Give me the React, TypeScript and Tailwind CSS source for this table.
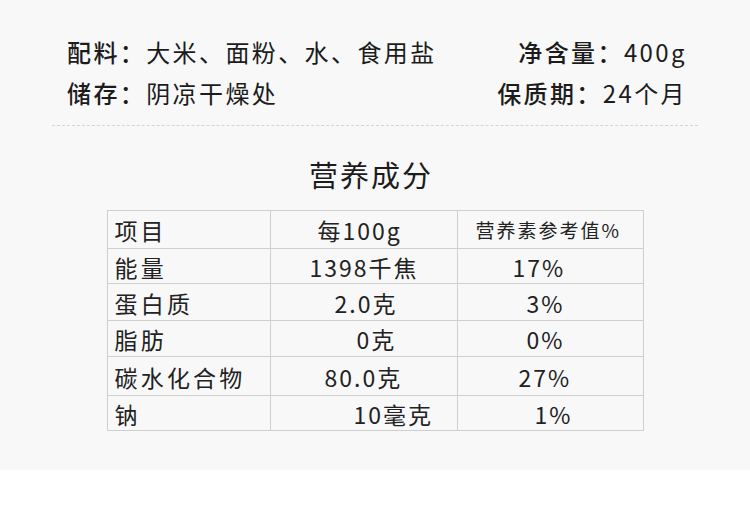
const FONT = { fontFamily: '"Noto Sans CJK SC", "Noto Sans", sans-serif' };

interface Row {
  name: string;
  amount: string;
  nrv: string;
  h: string;
  amountPad: string;
  nrvPad: string;
}

const ROWS: Row[] = [
  { name: "能量", amount: "1398千焦", nrv: "17%", h: "h-[35px]", amountPad: "pl-[39px]", nrvPad: "pl-[55px]" },
  { name: "蛋白质", amount: "2.0克", nrv: "3%", h: "h-[37px]", amountPad: "pl-[64px]", nrvPad: "pl-[69px]" },
  { name: "脂肪", amount: "0克", nrv: "0%", h: "h-[36px]", amountPad: "pl-[86px]", nrvPad: "pl-[69px]" },
  { name: "碳水化合物", amount: "80.0克", nrv: "27%", h: "h-[39px]", amountPad: "pl-[54px]", nrvPad: "pl-[61px]" },
  { name: "钠", amount: "10毫克", nrv: "1%", h: "h-[35px]", amountPad: "pl-[83px]", nrvPad: "pl-[77px]" },
];

function Cell({ children, className = "" }: { children: React.ReactNode; className?: string }) {
  return (
    <div className={`flex items-center pt-[2px] border-r border-b border-[#cfcfcf] ${className}`}>
      {children}
    </div>
  );
}

export default function App() {
  return (
    <div className="w-[750px] h-[510px] bg-white" style={FONT}>
      <div className="h-[470px] bg-[#f8f8f8] pt-[31px]">
        {/* Top info */}
        <div className="mx-[52px]">
          <div className="flex justify-between pl-[15px] pr-[11px] text-[24px] leading-[41px] tracking-[2.4px] text-[#1c1c1c]">
            <div className="flex flex-col">
              <div>
                <span className="font-medium">配料：</span>大米、面粉、水、食用盐
              </div>
              <div>
                <span className="font-medium">储存：</span>阴凉干燥处
              </div>
            </div>
            <div className="flex flex-col items-end">
              <div>
                <span className="font-medium">净含量：</span>400g
              </div>
              <div>
                <span className="font-medium">保质期：</span>24个月
              </div>
            </div>
          </div>
          <div className="mt-[12px] border-t border-dashed border-[#d4d4d4]" />
        </div>

        {/* Title */}
        <div className="mt-[28px] text-center text-[29px] leading-[40px] tracking-[2px] text-[#1c1c1c] pr-[8px]">
          营养成分
        </div>

        {/* Table */}
        <div className="mx-auto mt-[16px] w-[537px] border-t border-l border-[#cfcfcf] text-[#222] text-[23px] tracking-[2px] grid grid-cols-[163px_187px_186px]">
          <Cell className="h-[38px] pl-[7px] tracking-[3px]">项目</Cell>
          <Cell className="h-[38px] pl-[47px]">每100g</Cell>
          <Cell className="h-[38px] pl-[18px] text-[19px]">营养素参考值%</Cell>
          {ROWS.map((r) => (
            <div key={r.name} className="contents">
              <Cell className={`${r.h} pl-[7px] tracking-[3.2px]`}>{r.name}</Cell>
              <Cell className={`${r.h} ${r.amountPad}`}>{r.amount}</Cell>
              <Cell className={`${r.h} ${r.nrvPad}`}>{r.nrv}</Cell>
            </div>
          ))}
        </div>
      </div>
    </div>
  );
}
